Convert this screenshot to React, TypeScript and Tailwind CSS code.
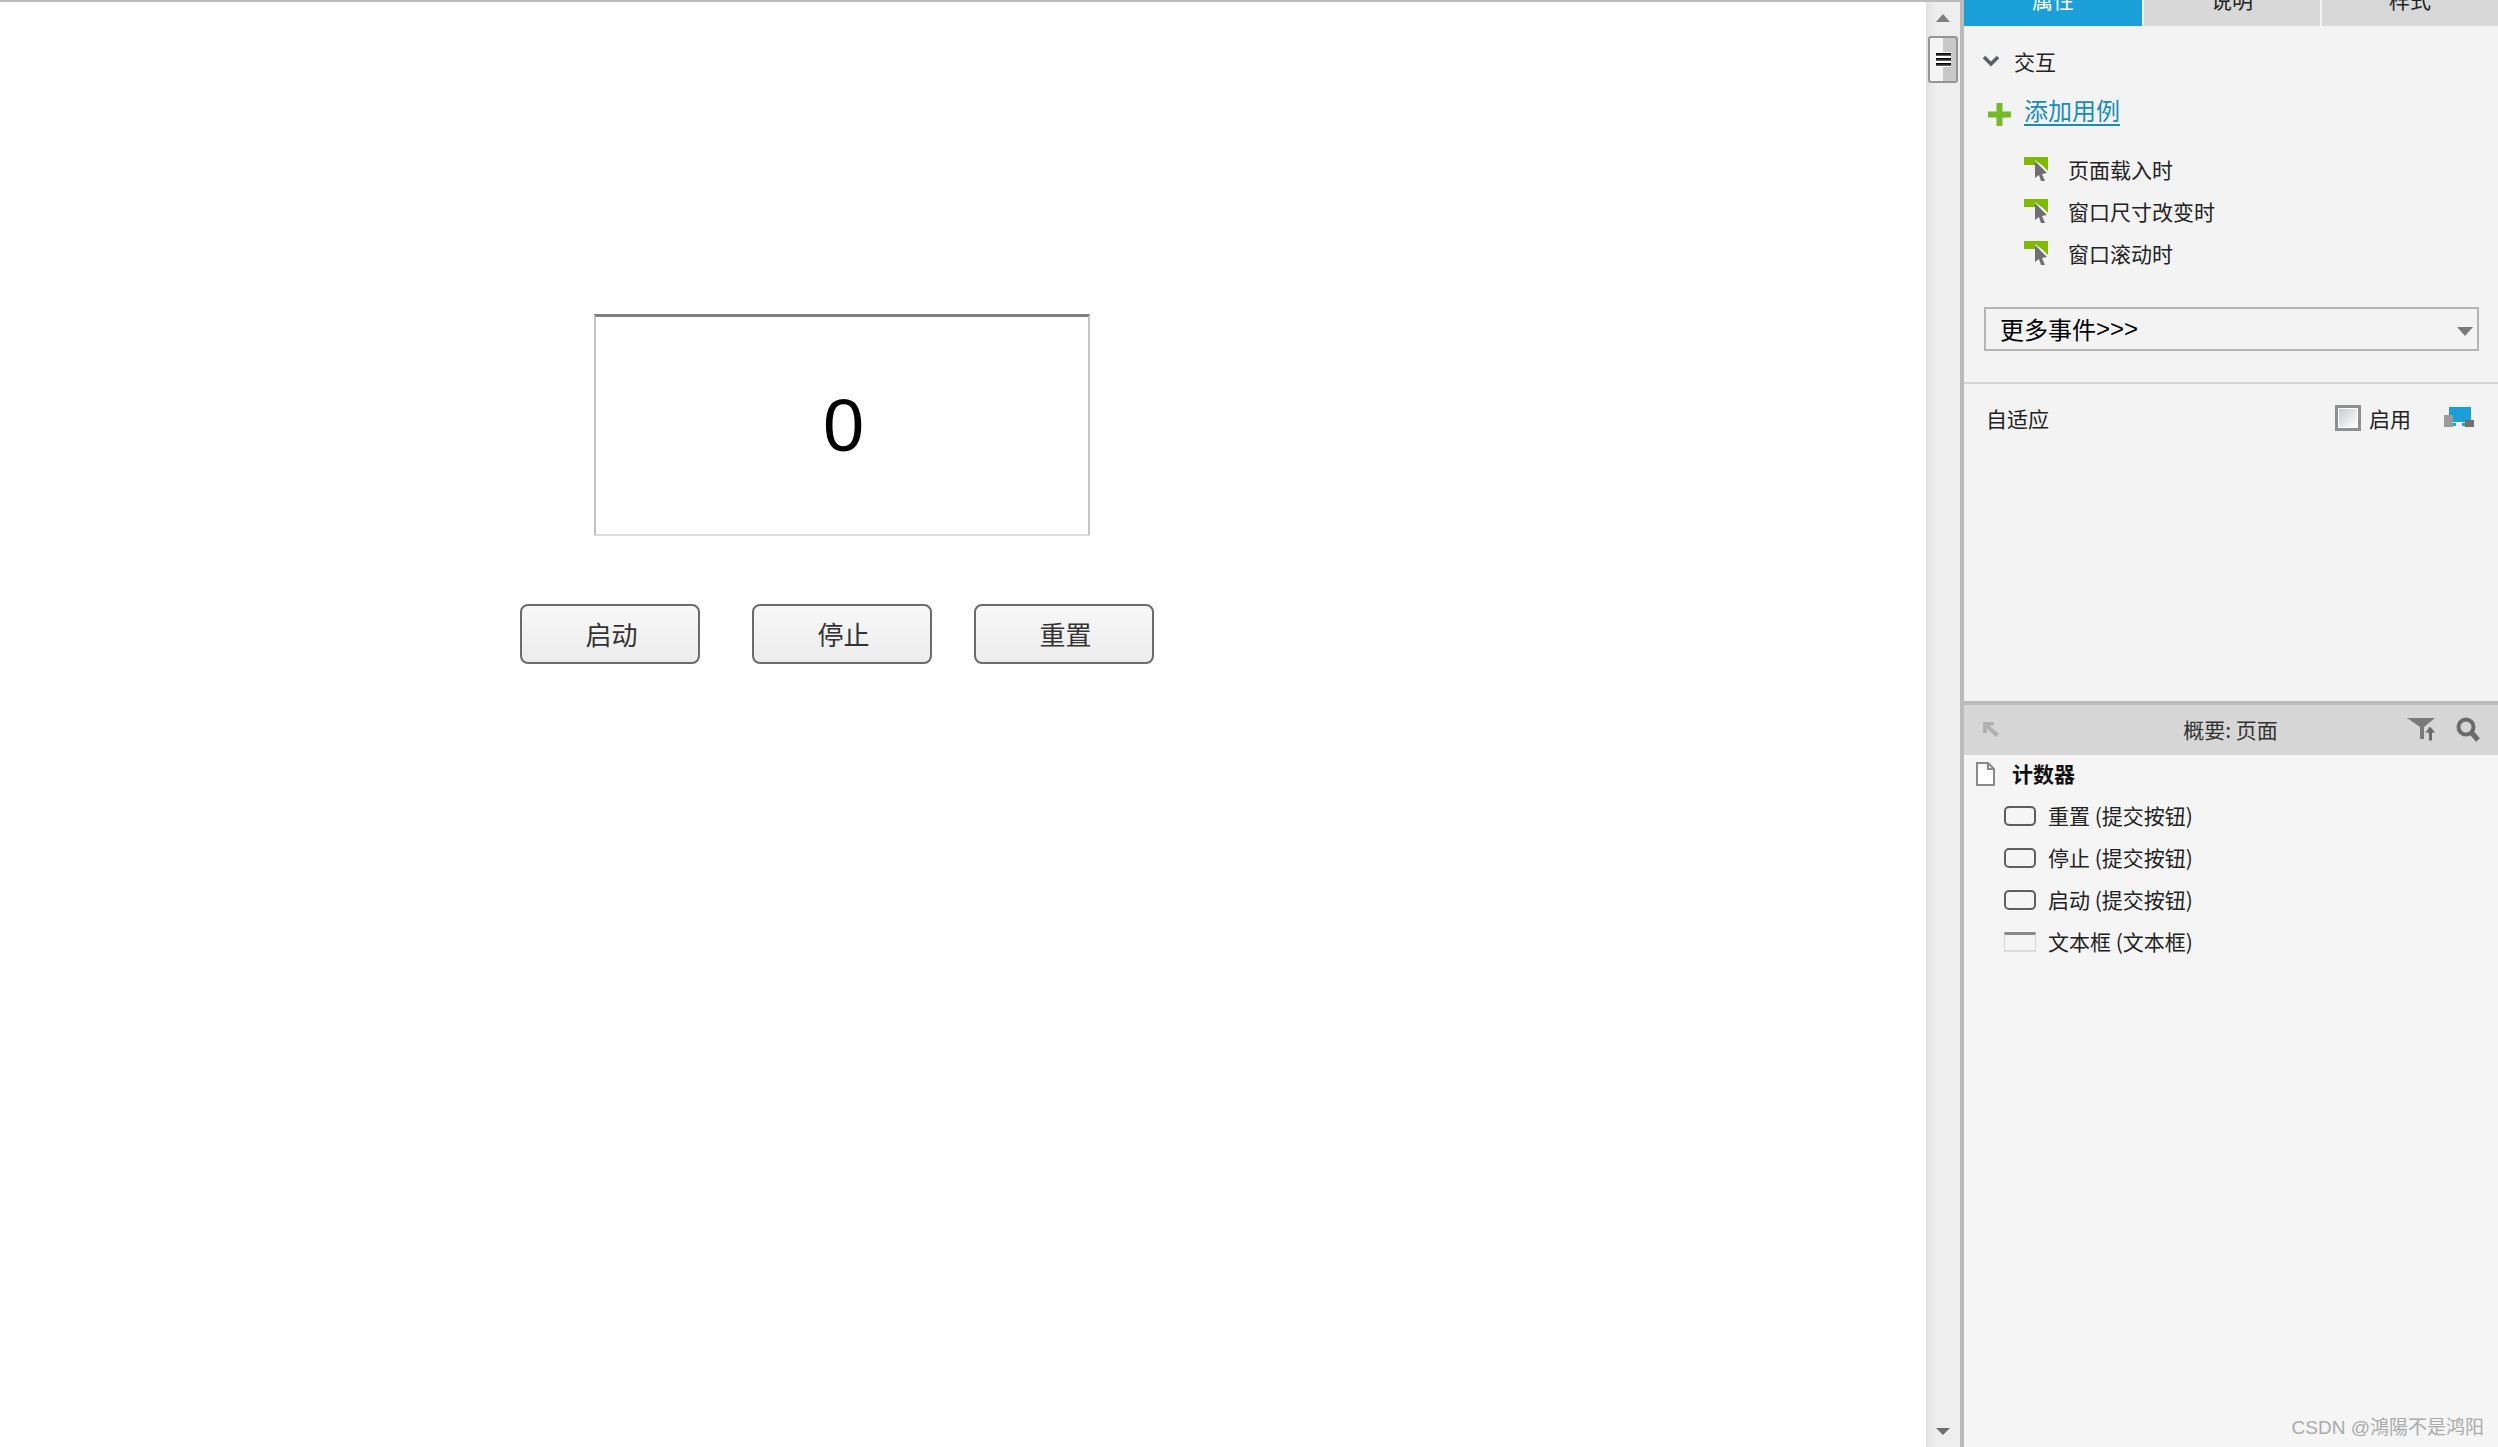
import React from 'react';

const cjk = "font-['Noto_Sans_CJK_SC','Liberation_Sans',sans-serif]";

function EventIcon() {
  return (
    <svg width="24" height="24" viewBox="0 0 24 24" className="shrink-0">
      <path d="M0 0H24V14L19 9L11 3V8H0Z" fill="#7fba00" />
      <path d="M11 4L23 16L18 17L21 24L17 24L15 18L11 21Z" fill="#6f6f6f" />
    </svg>
  );
}

function ButtonIcon() {
  return <div className="h-[20px] w-[32px] shrink-0 rounded-[5px] border-2 border-[#5f5f5f]" />;
}

function Tab({ label, active }: { label: string; active?: boolean }) {
  return (
    <div
      className={`flex h-[26px] items-end justify-center overflow-hidden pb-[15px] text-[21px] leading-[24px] ${
        active ? 'w-[178px] bg-[#1a9fd9] text-white' : 'flex-1 bg-[#d8d8d8] text-[#222]'
      }`}
    >
      <span className="shrink-0">{label}</span>
    </div>
  );
}

export default function App() {
  const events = ['页面载入时', '窗口尺寸改变时', '窗口滚动时'];
  const outline = ['重置 (提交按钮)', '停止 (提交按钮)', '启动 (提交按钮)'];

  return (
    <div className={`flex h-[1447px] w-[2498px] overflow-hidden bg-white ${cjk}`}>
      {/* Canvas */}
      <div className="w-[1926px] shrink-0 border-t-2 border-[#bbbbbb] pt-[312px]">
        <div className="ml-[594px] flex h-[222px] w-[496px] items-center justify-center border-x-2 border-t-[3px] border-b-2 border-x-[#c4c4c4] border-t-[#808080] border-b-[#dcdcdc] pl-[3px] font-['Liberation_Sans',sans-serif] text-[74px] leading-none text-black">
          0
        </div>
        <div className="ml-[520px] mt-[68px] flex text-[26px] text-[#333]">
          {['启动', '停止', '重置'].map((label, i) => (
            <div
              key={label}
              className={`flex h-[60px] w-[180px] items-center justify-center rounded-[8px] border-2 border-[#6b6b6b] bg-gradient-to-b from-[#f8f8f8] to-[#ececec] pl-[3px] pb-[2px] ${
                i === 1 ? 'ml-[52px]' : i === 2 ? 'ml-[42px]' : ''
              }`}
            >
              {label}
            </div>
          ))}
        </div>
      </div>

      {/* Scrollbar */}
      <div className="flex w-[34px] shrink-0 flex-col items-center border-t-2 border-[#bbbbbb] bg-gradient-to-r from-[#e2e2e2] from-0% to-[#eeeeee] to-30% pt-[12px]">
        <div className="h-0 w-0 border-x-[7px] border-b-[8px] border-x-transparent border-b-[#808080]" />
        <div className="mt-[14px] flex h-[47px] w-[30px] items-center justify-center rounded-[3px] border-2 border-[#959595] bg-gradient-to-r from-[#f4f4f4] from-50% to-[#c8c8c8] to-50%">
          <div className="flex w-[15px] flex-col gap-[2px] bg-white py-[1px]">
            <div className="h-[3px] bg-gradient-to-b from-black to-[#777]" />
            <div className="h-[3px] bg-gradient-to-b from-black to-[#777]" />
            <div className="h-[3px] bg-gradient-to-b from-black to-[#777]" />
          </div>
        </div>
        <div className="mt-auto mb-[12px] h-0 w-0 border-x-[7px] border-t-[7px] border-x-transparent border-t-[#707070]" />
      </div>
      <div className="w-[4px] shrink-0 bg-[#bbbbbb]" />

      {/* Right panel */}
      <div className="flex min-w-0 flex-1 flex-col bg-[#f3f3f3] text-[21px] leading-[28px] text-[#222]">
        <div className="flex gap-[2px]">
          <Tab label="属性" active />
          <Tab label="说明" />
          <Tab label="样式" />
        </div>

        {/* Interactions */}
        <div className="h-[675px] shrink-0">
          <div className="ml-[18px] mt-[21px] flex items-center gap-[14px]">
            <svg width="18" height="12" viewBox="0 0 18 12">
              <path d="M2 2L9 9L16 2" fill="none" stroke="#5a5f66" strokeWidth="3.6" />
            </svg>
            <span>交互</span>
          </div>
          <div className="ml-[24px] mt-[19px] flex h-[32px] items-center gap-[13px]">
            <svg width="23" height="23" viewBox="0 0 23 23" className="mt-[9px]">
              <path d="M8.5 0H14.5V8.5H23V14.5H14.5V23H8.5V14.5H0V8.5H8.5Z" fill="#77b82a" />
            </svg>
            <span className="text-[24px] text-[#1a8cbc] underline underline-offset-[4px]">添加用例</span>
          </div>
          <div className="ml-[60px] mt-[29px] flex flex-col gap-[14px]">
            {events.map((label) => (
              <div key={label} className="flex h-[28px] items-center gap-[20px]">
                <EventIcon />
                <span className="pb-[1px]">{label}</span>
              </div>
            ))}
          </div>
          <div className="relative ml-[20px] mt-[40px] flex h-[44px] w-[495px] items-center border-2 border-[#b5b5b5] pl-[14px] pb-[1px] text-[24px] text-black">
            更多事件<span className="font-['Liberation_Sans',sans-serif]">&gt;&gt;&gt;</span>
            <div className="absolute right-[4px] top-[18px] h-0 w-0 border-x-[8px] border-t-[9px] border-x-transparent border-t-[#7a7a7a]" />
          </div>
          <div className="mt-[31px] h-[2px] bg-[#d5d5d5]" />
          <div className="ml-[22px] mt-[20px] flex items-center">
            <span>自适应</span>
            <div className="ml-[286px] flex h-[26px] w-[26px] items-center justify-center border-[3px] border-[#8f8f8f] bg-white p-[1px]">
              <div className="h-full w-full bg-gradient-to-br from-[#c8ccd2] to-white" />
            </div>
            <span className="ml-[8px]">启用</span>
            <svg width="30" height="20" viewBox="0 0 30 20" className="ml-[33px] mb-[2px]">
              <path d="M5 0H27V15H5Z" fill="#1a9fd9" />
              <path d="M0 8H9V20H0Z" fill="#9a9a9a" />
              <path d="M21 13H30V20H21Z" fill="#707070" />
              <path d="M9 16H12V19H9ZM18 16H21V19H18Z" fill="#1a9fd9" />
            </svg>
          </div>
        </div>

        {/* Outline */}
        <div className="h-[4px] shrink-0 bg-[#bbbbbb]" />
        <div className="relative flex h-[50px] shrink-0 items-center justify-center bg-[#d6d6d6] pr-[1px] pb-[2px] text-[#333]">
          <svg width="17" height="15" viewBox="0 0 17 15" className="absolute left-[19px] top-[17px]">
            <path d="M0 0H11V3.5H6L16 11.5L13 15L4 6.5V11H0Z" fill="#b0b0b0" />
          </svg>
          <span>概要: 页面</span>
          <svg width="30" height="24" viewBox="0 0 30 24" className="absolute left-[443px] top-[12px]">
            <path d="M0 1H28L17 10V22H13V10Z" fill="#7a7a7a" />
            <path d="M23 9L29 16H25.5V24H21.5V16H17.5Z" fill="#6a6a6a" stroke="#d6d6d6" strokeWidth="1" />
          </svg>
          <svg width="24" height="25" viewBox="0 0 24 25" className="absolute left-[492px] top-[12px]">
            <circle cx="10" cy="10" r="7.5" fill="none" stroke="#6a6a6a" strokeWidth="4" />
            <path d="M15 15L22 23" stroke="#6a6a6a" strokeWidth="5" />
          </svg>
        </div>
        <div className="flex-1 bg-[#f5f5f5]">
          <div className="ml-[12px] mt-[5px] flex h-[28px] items-center gap-[17px]">
            <svg width="19" height="24" viewBox="0 0 19 24">
              <path d="M1 1H12L18 7V23H1Z" fill="#ffffff" stroke="#8a8a8a" strokeWidth="2" />
              <path d="M12 1V7H18" fill="none" stroke="#8a8a8a" strokeWidth="2" />
            </svg>
            <span className="pb-[2px] font-bold text-[#111]">计数器</span>
          </div>
          <div className="ml-[40px] mt-[14px] flex flex-col gap-[14px]">
            {outline.map((label) => (
              <div key={label} className="flex h-[28px] items-center gap-[12px]">
                <ButtonIcon />
                <span className="pb-[2px]">{label}</span>
              </div>
            ))}
            <div className="flex h-[28px] items-center gap-[12px]">
              <div className="h-[20px] w-[32px] shrink-0 border-x border-t-[3px] border-b-2 border-x-[#d8d8d8] border-t-[#8a8a8a] border-b-[#dcdcdc]" />
              <span className="pb-[2px]">文本框 (文本框)</span>
            </div>
          </div>
        </div>
        <div className="bg-[#f5f5f5] pb-[6px] pr-[14px] text-right font-['Liberation_Sans','Noto_Sans_CJK_TC',sans-serif] text-[19px] leading-[26px] text-[#aaaaaa]">
          CSDN @鴻陽不是鸿阳
        </div>
      </div>
    </div>
  );
}
